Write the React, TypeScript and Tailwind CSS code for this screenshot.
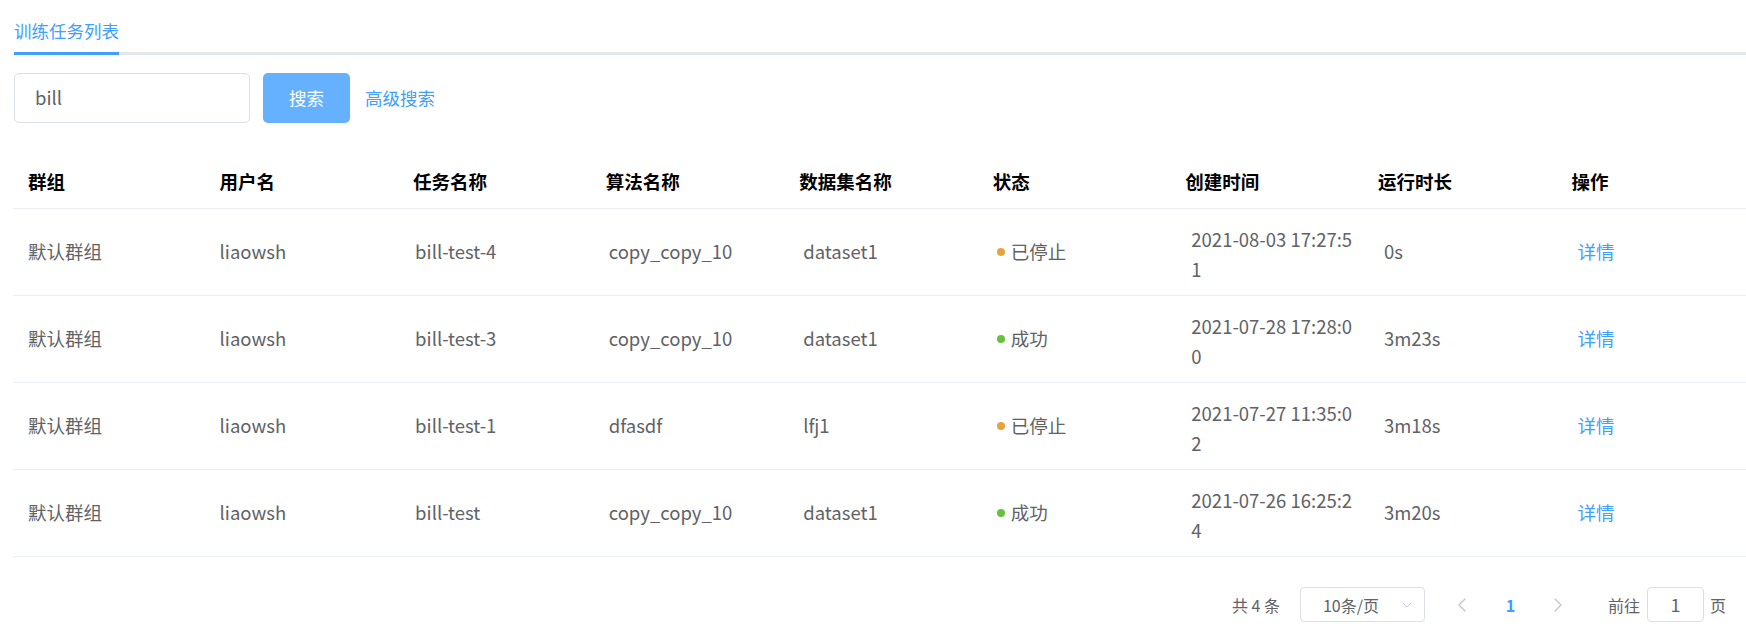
import React from "react";
import { ChevronLeft, ChevronRight, ChevronDown } from "lucide-react";

type Row = {
  group: string;
  user: string;
  task: string;
  algo: string;
  dataset: string;
  status: "stopped" | "success";
  created: [string, string];
  duration: string;
};

const rows: Row[] = [
  { group: "默认群组", user: "liaowsh", task: "bill-test-4", algo: "copy_copy_10", dataset: "dataset1", status: "stopped", created: ["2021-08-03 17:27:5", "1"], duration: "0s" },
  { group: "默认群组", user: "liaowsh", task: "bill-test-3", algo: "copy_copy_10", dataset: "dataset1", status: "success", created: ["2021-07-28 17:28:0", "0"], duration: "3m23s" },
  { group: "默认群组", user: "liaowsh", task: "bill-test-1", algo: "dfasdf", dataset: "lfj1", status: "stopped", created: ["2021-07-27 11:35:0", "2"], duration: "3m18s" },
  { group: "默认群组", user: "liaowsh", task: "bill-test", algo: "copy_copy_10", dataset: "dataset1", status: "success", created: ["2021-07-26 16:25:2", "4"], duration: "3m20s" },
];

const headers = ["群组", "用户名", "任务名称", "算法名称", "数据集名称", "状态", "创建时间", "运行时长", "操作"];
const headPad = ["pl-[15px]", "pl-[14px]", "pl-[15px]", "pl-[15px]", "pl-[16px]", "pl-[17px]", "pl-[17px]", "pl-[17px]", "pl-[18px]"];
const bodyPad = ["pl-[15px]", "pl-[14px]", "pl-[17px]", "pl-[18px]", "pl-[20px]", "pl-[21px]", "pl-[23px]", "pl-[23px]", "pl-[24px]"];

export default function App() {
  return (
    <div className="w-[1746px] h-[634px] bg-white overflow-hidden pl-[13px] font-['Noto_Sans_CJK_SC','Noto_Sans',sans-serif]">
      {/* Tabs */}
      <div className="ml-[1px] relative h-[55px]">
        <div className="h-[52px] pt-[10px] flex items-center">
          <span className="text-[17.5px] text-[#409EFF] leading-none">训练任务列表</span>
        </div>
        <div className="h-[3px] bg-[#E4E7ED] w-full" />
        <div className="absolute left-0 bottom-0 h-[3px] w-[105px] bg-[#409EFF]" />
      </div>

      {/* Search */}
      <div className="flex items-center mt-[18px] ml-[1px]">
        <div className="w-[236px] h-[50px] border border-[#DCDFE6] rounded-[5px] flex items-center pl-[20px] text-[18.5px] text-[#606266]">
          bill
        </div>
        <button className="ml-[13px] w-[87px] h-[50px] rounded-[5px] bg-[#66B1FF] text-white text-[17.5px] flex items-center justify-center">
          搜索
        </button>
        <span className="ml-[15px] text-[17.5px] text-[#409EFF]">高级搜索</span>
      </div>

      {/* Table */}
      <div className="mt-[32px] w-[1733px]">
        <div className="grid grid-cols-9 h-[54px] border-b border-[#EBEEF5] items-center">
          {headers.map((h, i) => (
            <div key={h} className={`${headPad[i]} text-[18.5px] font-bold text-black`}>
              {h}
            </div>
          ))}
        </div>
        {rows.map((r, ri) => (
          <div key={ri} className="grid grid-cols-9 h-[87px] border-b border-[#EBEEF5] items-center text-[18.5px] text-[#606266]">
            <div className={bodyPad[0]}>{r.group}</div>
            <div className={bodyPad[1]}>{r.user}</div>
            <div className={bodyPad[2]}>{r.task}</div>
            <div className={bodyPad[3]}>{r.algo}</div>
            <div className={bodyPad[4]}>{r.dataset}</div>
            <div className={`${bodyPad[5]} flex items-center`}>
              <span className={`w-[8px] h-[8px] rounded-full mr-[6px] ${r.status === "stopped" ? "bg-[#E6A23C]" : "bg-[#67C23A]"}`} />
              <span>{r.status === "stopped" ? "已停止" : "成功"}</span>
            </div>
            <div className={`${bodyPad[6]} pt-[4px] leading-[30px] whitespace-nowrap`}>
              <div>{r.created[0]}</div>
              <div>{r.created[1]}</div>
            </div>
            <div className={bodyPad[7]}>{r.duration}</div>
            <div className={`${bodyPad[8]} text-[#409EFF]`}>详情</div>
          </div>
        ))}
      </div>

      {/* Pagination */}
      <div className="mt-[30px] h-[35px] flex items-center justify-end pr-[20px] text-[16px] text-[#606266]">
        <span>共 4 条</span>
        <div className="ml-[20px] w-[125px] h-[35px] border border-[#DCDFE6] rounded-[4px] flex items-center justify-between pl-[22px] pr-[9px]">
          <span>10条/页</span>
          <ChevronDown size={16} strokeWidth={1.4} color="#C0C4CC" />
        </div>
        <div className="ml-[19px] w-[37px] flex justify-center">
          <ChevronLeft size={24} strokeWidth={1.3} color="#C0C4CC" />
        </div>
        <div className="ml-[7px] w-[45px] text-center text-[#409EFF] font-bold">1</div>
        <div className="ml-[7px] w-[37px] flex justify-center">
          <ChevronRight size={24} strokeWidth={1.3} color="#C0C4CC" />
        </div>
        <span className="ml-[31px]">前往</span>
        <div className="ml-[7px] w-[57px] h-[35px] border border-[#DCDFE6] rounded-[4px] flex items-center justify-center text-[18px]">
          1
        </div>
        <span className="ml-[6px]">页</span>
      </div>
    </div>
  );
}
